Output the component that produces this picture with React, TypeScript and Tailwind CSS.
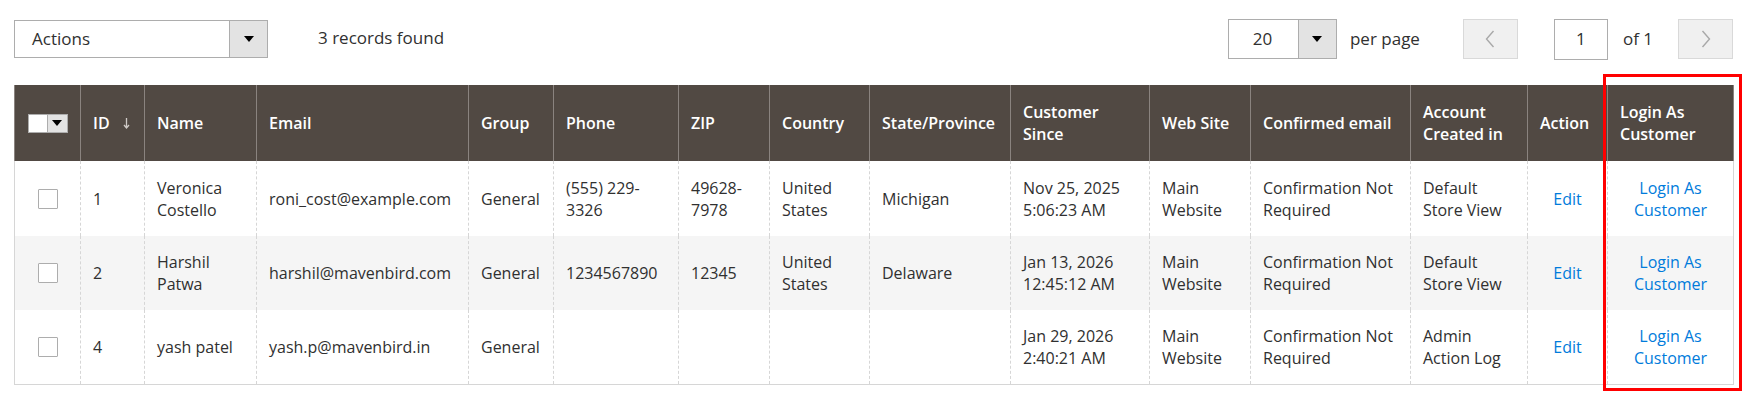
const columns = [
  { label: "", w: "w-[66px]" },
  { label: "ID", w: "w-[64px]" },
  { label: "Name", w: "w-[112px]" },
  { label: "Email", w: "w-[212px]" },
  { label: "Group", w: "w-[85px]" },
  { label: "Phone", w: "w-[125px]" },
  { label: "ZIP", w: "w-[91px]" },
  { label: "Country", w: "w-[100px]" },
  { label: "State/Province", w: "w-[141px]" },
  { label: "Customer Since", w: "w-[139px]" },
  { label: "Web Site", w: "w-[101px]" },
  { label: "Confirmed email", w: "w-[160px]" },
  { label: "Account Created in", w: "w-[117px]" },
  { label: "Action", w: "w-[80px]" },
  { label: "Login As Customer", w: "w-[126px]" },
];

const rows = [
  [
    "1",
    "Veronica Costello",
    "roni_cost@example.com",
    "General",
    "(555) 229-3326",
    "49628-7978",
    "United States",
    "Michigan",
    "Nov 25, 2025 5:06:23 AM",
    "Main Website",
    "Confirmation Not Required",
    "Default Store View",
  ],
  [
    "2",
    "Harshil Patwa",
    "harshil@mavenbird.com",
    "General",
    "1234567890",
    "12345",
    "United States",
    "Delaware",
    "Jan 13, 2026 12:45:12 AM",
    "Main Website",
    "Confirmation Not Required",
    "Default Store View",
  ],
  [
    "4",
    "yash patel",
    "yash.p@mavenbird.in",
    "General",
    "",
    "",
    "",
    "",
    "Jan 29, 2026 2:40:21 AM",
    "Main Website",
    "Confirmation Not Required",
    "Admin Action Log",
  ],
];

function Caret() {
  return (
    <svg width="10" height="6" viewBox="0 0 10 6">
      <path d="M0 0 L10 0 L5 6 Z" fill="#000" />
    </svg>
  );
}

function Chevron({ dir }: { dir: "left" | "right" }) {
  return (
    <svg width="10" height="18" viewBox="0 0 10 18">
      <path
        d={dir === "left" ? "M8.5 1 L1.5 9 L8.5 17" : "M1.5 1 L8.5 9 L1.5 17"}
        fill="none"
        stroke="#a8a8a8"
        strokeWidth="1.4"
      />
    </svg>
  );
}

export default function App() {
  return (
    <div className="relative w-[1750px] h-[408px] bg-white font-['Open_Sans',sans-serif] text-[16px] text-[#303030] overflow-hidden">
      <div className="pl-[14px] pt-[19px] w-[1733px]">
        <div className="flex items-center justify-between h-[40px] text-[17px] leading-[22px]">
          <div className="flex items-center">
            <div className="flex h-[38px] w-[254px] border border-[#adadad] bg-white">
              <div className="flex-1 flex items-center pl-[17px] pb-[1px]">Actions</div>
              <div className="w-[38px] flex items-center justify-center bg-[#e3e3e3] border-l border-[#adadad]">
                <Caret />
              </div>
            </div>
            <span className="ml-[50px] pb-[2px]">3 records found</span>
          </div>
          <div className="flex items-center">
            <div className="flex h-[40px] w-[109px] border border-[#adadad] bg-white">
              <div className="flex-1 flex items-center justify-center pr-[2px]">20</div>
              <div className="w-[38px] flex items-center justify-center bg-[#e3e3e3] border-l border-[#adadad]">
                <Caret />
              </div>
            </div>
            <span className="ml-[13px]">per page</span>
            <button className="ml-[43px] h-[40px] w-[55px] flex items-center justify-center bg-[#f0f0f0] border border-[#d9d9d9]">
              <Chevron dir="left" />
            </button>
            <div className="ml-[36px] h-[41px] w-[54px] flex items-center justify-center border border-[#adadad] bg-white">
              1
            </div>
            <span className="ml-[15px]">of 1</span>
            <button className="ml-[25px] h-[40px] w-[55px] flex items-center justify-center bg-[#f0f0f0] border border-[#d9d9d9]">
              <Chevron dir="right" />
            </button>
          </div>
        </div>

        <table className="mt-[26px] table-fixed border-collapse w-[1719px] leading-[22px]">
          <thead>
            <tr className="h-[76px] bg-[#514943] text-white">
              {columns.map((c, i) => (
                <th
                  key={i}
                  className={`${c.w} border-x border-[#8a837f] pl-[12px] pr-[6px] text-left font-semibold align-middle`}
                >
                  {i === 0 ? (
                    <div className="flex justify-center -ml-[12px] -mr-[6px]">
                      <div className="flex h-[19px] border border-[#adadad]">
                        <div className="w-[18px] bg-white" />
                        <div className="w-[20px] bg-[#e3e3e3] flex items-center justify-center border-l border-[#adadad]">
                          <Caret />
                        </div>
                      </div>
                    </div>
                  ) : i === 1 ? (
                    <span className="flex items-center">
                      ID
                      <svg className="ml-[13px]" width="7" height="11" viewBox="0 0 7 11">
                        <path d="M3.5 0 V9.5 M1 7 L3.5 10 L6 7" fill="none" stroke="#cfcac6" strokeWidth="1.3" />
                      </svg>
                    </span>
                  ) : (
                    c.label
                  )}
                </th>
              ))}
            </tr>
          </thead>
          <tbody>
            {rows.map((r, ri) => (
              <tr
                key={ri}
                className={`${ri === 0 ? "h-[75px]" : "h-[74px]"} ${ri === 1 ? "bg-[#f5f5f5]" : "bg-white"} ${ri === 2 ? "border-b border-[#d6d6d6]" : ""}`}
              >
                <td className="border-x border-dashed border-[#d6d6d6] align-middle">
                  <div className="mx-auto h-[20px] w-[20px] border border-[#adadad] bg-white rounded-[1px]" />
                </td>
                {r.map((v, ci) => (
                  <td
                    key={ci}
                    className="border-x border-dashed border-[#d6d6d6] pl-[12px] pr-[6px] align-middle"
                  >
                    {v}
                  </td>
                ))}
                <td className="border-x border-dashed border-[#d6d6d6] text-center align-middle text-[#007bdb]">
                  Edit
                </td>
                <td className="border-x border-dashed border-[#d6d6d6] text-center align-middle text-[#007bdb] px-[10px]">
                  Login As Customer
                </td>
              </tr>
            ))}
          </tbody>
        </table>
      </div>
      <style>{`table tbody td:first-child { border-left-style: solid; } table tbody td:last-child { border-right-style: solid; } table tbody tr:last-child td { border-bottom: 1px solid #d6d6d6; }`}</style>
      <div className="absolute left-[1603px] top-[74px] w-[139px] h-[317px] border-[3px] border-[#ff0000]" />
    </div>
  );
}
